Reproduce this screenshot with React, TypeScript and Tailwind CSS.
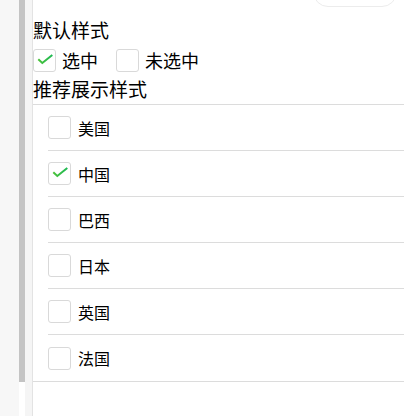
import { useState } from 'react';

const countries = [
  { name: '美国', checked: false },
  { name: '中国', checked: true },
  { name: '巴西', checked: false },
  { name: '日本', checked: false },
  { name: '英国', checked: false },
  { name: '法国', checked: false },
];

function Box({ checked }: { checked: boolean }) {
  return (
    <span className="flex h-[23px] w-[23px] shrink-0 items-center justify-center rounded-[3px] border border-[#d9d9d9] bg-white">
      {checked && (
        <svg width="23" height="23" viewBox="0 0 23 23" className="-m-px">
          <defs>
            <linearGradient id="ck" x1="0" y1="0" x2="1" y2="0">
              <stop offset="0" stopColor="#4cc23a" />
              <stop offset="1" stopColor="#1db954" />
            </linearGradient>
          </defs>
          <path d="M5.3 10.3 L9.3 14 L19.3 6" fill="none" stroke="url(#ck)" strokeWidth="2" />
        </svg>
      )}
    </span>
  );
}

export default function App() {
  const [list, setList] = useState(countries);

  return (
    <div
      className="flex h-[416px] w-[404px] overflow-hidden bg-white text-[#000]"
      style={{ fontFamily: '"Noto Sans CJK SC", "Noto Sans", sans-serif' }}
    >
      {/* 左侧滚动条区域 */}
      <div className="w-[19px] shrink-0 bg-[#f7f7f7]" />
      <div className="flex w-[6px] shrink-0 flex-col bg-white">
        <div className="h-[382px] bg-[#c4c4c4]" />
      </div>
      <div className="w-[8px] shrink-0 border-r border-[#e3e3e3] bg-[#f5f5f5]" />

      <div className="relative flex-1 pt-[19px]">
        <div className="absolute right-[7px] top-[-24px] h-[31px] w-[84px] rounded-[15px] border border-[#ececec] bg-white" />

        <div className="text-[19px] leading-[22px]">默认样式</div>
        <div className="mt-[8px] flex items-center text-[18px] leading-[23px]">
          <label className="flex items-center gap-[6px]">
            <Box checked />
            <span>选中</span>
          </label>
          <label className="ml-[18px] flex items-center gap-[6px]">
            <Box checked={false} />
            <span>未选中</span>
          </label>
        </div>
        <div className="mt-[6px] text-[19px] leading-[22px]">推荐展示样式</div>

        <div className="mt-[4px] border-y border-[#dcdcdc]">
          <div className="ml-[15px]">
            {list.map((c, i) => (
              <div
                key={c.name}
                onClick={() =>
                  setList((l) => l.map((x, j) => (j === i ? { ...x, checked: !x.checked } : x)))
                }
                className={`flex h-[46px] items-center gap-[7px] text-[16px] ${
                  i < list.length - 1 ? 'border-b border-[#dcdcdc]' : ''
                }`}
              >
                <Box checked={c.checked} />
                <span>{c.name}</span>
              </div>
            ))}
          </div>
        </div>
      </div>
    </div>
  );
}
